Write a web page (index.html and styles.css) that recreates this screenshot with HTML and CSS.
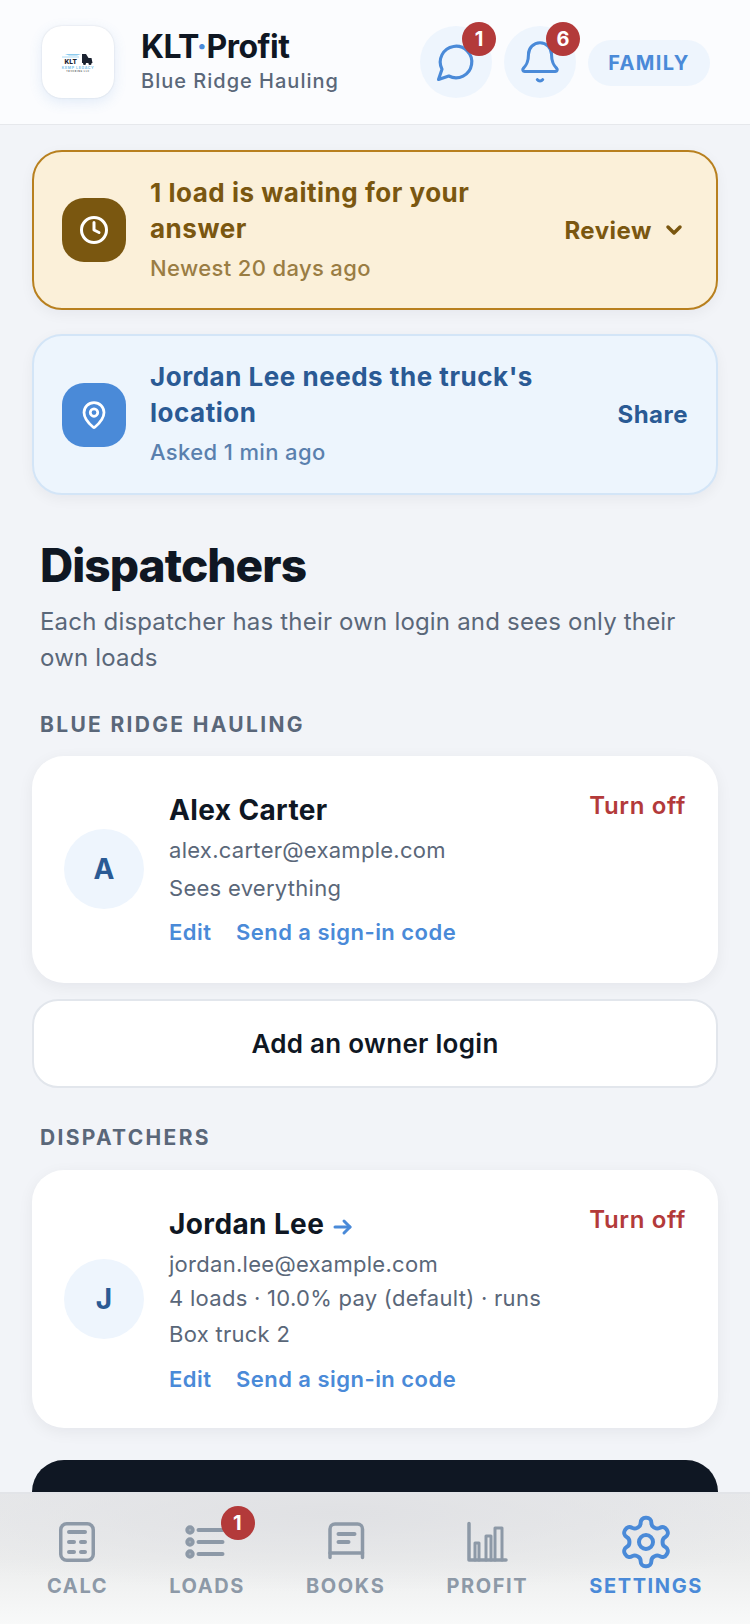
FILE: index.html
```html
<!DOCTYPE html>
<html lang="en">
<head>
<meta charset="utf-8">
<title>KLT Profit</title>
<link rel="stylesheet" href="styles.css">
</head>
<body>
<div class="app">
  <header class="topbar">
    <div class="logo">
      <svg width="42" height="20" viewBox="0 0 42 20">
        <path d="M8 2h16l-4 1.500H12z" fill="#8ccbef"/>
        <path d="M5 4.500h17v1H5z" fill="#a8d8f2"/>
        <path d="M25 2h4l2.500 4h3l1 5H25z" fill="#1b2230"/>
        <circle cx="27.500" cy="11.500" r="1.500" fill="#1b2230"/><circle cx="33" cy="11.500" r="1.500" fill="#1b2230"/>
        <text x="7.500" y="12" class="logo-klt">KLT</text>
        <text x="21" y="16.500" text-anchor="middle" class="logo-name">KEMP LEGACY</text>
        <text x="21" y="19.500" text-anchor="middle" class="logo-sub">TRUCKING LLC</text>
      </svg>
    </div>
    <div class="brand">
      <div class="brand-title">KLT<span class="dot">·</span>Profit</div>
      <div class="brand-sub">Blue Ridge Hauling</div>
    </div>
    <div class="top-actions">
      <div class="round-btn">
        <svg width="42" height="42" viewBox="0 0 24 24" fill="none" stroke="#4a8ad8" stroke-width="1.800" stroke-linecap="round" stroke-linejoin="round"><path d="M7.900 20A9 9 0 1 0 4 16.100L2 22Z"/></svg>
        <span class="badge">1</span>
      </div>
      <div class="round-btn">
        <svg width="46" height="46" viewBox="0 0 24 24" fill="none" stroke="#4a8ad8" stroke-width="1.600" stroke-linecap="round" stroke-linejoin="round"><path d="M10.600 21.200a1.800 1.800 0 0 0 2.800 0"/><path d="M3.300 15.300A1 1 0 0 0 4 17h16a1 1 0 0 0 .7-1.700C19.400 14 18 12.500 18 8A6 6 0 0 0 6 8c0 4.500-1.400 6-2.700 7.300"/></svg>
        <span class="badge">6</span>
      </div>
      <div class="pill">FAMILY</div>
    </div>
  </header>

  <main class="content">
    <section class="banner banner-wait">
      <div class="banner-icon icon-wait">
        <svg width="30" height="30" viewBox="0 0 24 24" fill="none" stroke="#fff" stroke-width="2.400" stroke-linecap="round" stroke-linejoin="round"><circle cx="12" cy="12" r="10"/><path d="M12 6v6l4 2"/></svg>
      </div>
      <div class="banner-text">
        <div class="banner-title">1 load is waiting for your answer</div>
        <div class="banner-sub">Newest 20 days ago</div>
      </div>
      <div class="banner-action">Review
        <svg width="24" height="24" viewBox="0 0 24 24" fill="none" stroke="currentColor" stroke-width="3.500" stroke-linecap="round" stroke-linejoin="round"><path d="m6 9 6 6 6-6"/></svg>
      </div>
    </section>

    <section class="banner banner-share">
      <div class="banner-icon icon-share">
        <svg width="30" height="30" viewBox="0 0 24 24" fill="none" stroke="#fff" stroke-width="2.200" stroke-linecap="round" stroke-linejoin="round"><path d="M20 10c0 5-5.500 10.200-7.400 11.800a1 1 0 0 1-1.200 0C9.500 20.200 4 15 4 10a8 8 0 0 1 16 0"/><circle cx="12" cy="10" r="3"/></svg>
      </div>
      <div class="banner-text">
        <div class="banner-title">Jordan Lee needs the truck's location</div>
        <div class="banner-sub">Asked 1 min ago</div>
      </div>
      <div class="banner-action action-share">Share</div>
    </section>

    <h1 class="page-title">Dispatchers</h1>
    <p class="page-sub">Each dispatcher has their own login and sees only their own loads</p>

    <h2 class="section-label label-first">BLUE RIDGE HAULING</h2>
    <article class="card">
      <div class="avatar">A</div>
      <div class="card-body">
        <div class="card-name">Alex Carter</div>
        <div class="card-line line-email">alex.carter@example.com</div>
        <div class="card-line line-solo">Sees everything</div>
        <div class="card-links"><span>Edit</span><span>Send a sign-in code</span></div>
      </div>
      <div class="turn-off">Turn off</div>
    </article>
    <div class="add-btn">Add an owner login</div>

    <h2 class="section-label label-second">DISPATCHERS</h2>
    <article class="card card-tall">
      <div class="avatar">J</div>
      <div class="card-body">
        <div class="card-name">Jordan Lee <svg class="arrow" width="24" height="24" viewBox="0 0 24 24" fill="none" stroke="#4a8ad8" stroke-width="3" stroke-linecap="round" stroke-linejoin="round"><path d="M4 12h15"/><path d="m13 6 6 6-6 6"/></svg></div>
        <div class="card-line line-email">jordan.lee@example.com</div>
        <div class="card-line card-wrap">4 loads · 10.0% pay (default) · runs Box truck 2</div>
        <div class="card-links"><span>Edit</span><span>Send a sign-in code</span></div>
      </div>
      <div class="turn-off">Turn off</div>
    </article>
    <div class="dark-card"></div>
  </main>

  <nav class="tabbar">
    <div class="tab">
      <svg width="44" height="44" viewBox="0 0 44 44" fill="none" stroke="#8d99a7" stroke-linecap="round"><rect x="4.750" y="3.750" width="32.500" height="36.500" rx="6" stroke-width="3.500"/><path d="M13 12h16M13 22h5M25 22h4M13 32h5M25 32h4" stroke-width="4"/></svg>
      <span>CALC</span>
    </div>
    <div class="tab">
      <svg width="44" height="44" viewBox="0 0 44 44" fill="none" stroke="#8d99a7" stroke-linecap="round"><circle cx="5" cy="10" r="3" stroke-width="3.400" fill="#a3adb8"/><circle cx="5" cy="22" r="3" stroke-width="3.400" fill="#a3adb8"/><circle cx="5" cy="34" r="3" stroke-width="3.400" fill="#a3adb8"/><path d="M13.500 10h24M13.500 22h24M13.500 34h24" stroke-width="4"/></svg>
      <span>LOADS</span>
      <span class="badge tab-badge">1</span>
    </div>
    <div class="tab">
      <svg width="44" height="44" viewBox="0 0 44 44" fill="none" stroke="#8d99a7" stroke-linecap="round" stroke-linejoin="round"><path d="M6 37.500V9a5 5 0 0 1 5-5h22.500a5 5 0 0 1 5 5v28.500" stroke-width="3.500"/><path d="M6 33h32.500" stroke-width="3.500"/><path d="M14.500 14h16M14.500 22h10" stroke-width="4"/></svg>
      <span>BOOKS</span>
    </div>
    <div class="tab">
      <svg width="44" height="44" viewBox="0 0 44 44" fill="none" stroke="#8d99a7" stroke-linecap="round" stroke-linejoin="round"><path d="M4 3.500V40h37" stroke-width="3.500"/><path d="M10 40V23h4v17M21 40V16h5v24M30 40V8h7v32" stroke-width="3"/></svg>
      <span>PROFIT</span>
    </div>
    <div class="tab tab-active">
      <svg width="58" height="58" viewBox="0 0 24 24" fill="none" stroke="#4a8ad8" stroke-width="1.650" stroke-linecap="round" stroke-linejoin="round"><path d="M12.220 2h-.44a2 2 0 0 0-2 2v.18a2 2 0 0 1-1 1.730l-.43.250a2 2 0 0 1-2 0l-.15-.08a2 2 0 0 0-2.730.730l-.22.380a2 2 0 0 0 .73 2.730l.15.100a2 2 0 0 1 1 1.720v.510a2 2 0 0 1-1 1.740l-.15.090a2 2 0 0 0-.73 2.730l.22.380a2 2 0 0 0 2.730.730l.15-.08a2 2 0 0 1 2 0l.43.250a2 2 0 0 1 1 1.730V20a2 2 0 0 0 2 2h.44a2 2 0 0 0 2-2v-.18a2 2 0 0 1 1-1.730l.43-.250a2 2 0 0 1 2 0l.15.080a2 2 0 0 0 2.730-.730l.22-.390a2 2 0 0 0-.73-2.730l-.15-.080a2 2 0 0 1-1-1.740v-.500a2 2 0 0 1 1-1.740l.15-.090a2 2 0 0 0 .73-2.730l-.22-.380a2 2 0 0 0-2.730-.730l-.15.080a2 2 0 0 1-2 0l-.43-.250a2 2 0 0 1-1-1.730V4a2 2 0 0 0-2-2z"/><circle cx="12" cy="12" r="2.900"/></svg>
      <span>SETTINGS</span>
    </div>
  </nav>
</div>
</body>
</html>
```
FILE: styles.css
```css
* { box-sizing: border-box; }
html, body { margin: 0; padding: 0; }
body { font-family: Inter, "Noto Sans", sans-serif; font-optical-sizing: none; color: #0f1723; background: #f2f4f8; }
.app { position: relative; width: 750px; height: 1624px; overflow: hidden; background: #f2f4f8; }

/* header */
.topbar { height: 125px; display: flex; align-items: center; padding: 0 40px 1px 42px; background: #fbfcfe; border-bottom: 1px solid #e6e8ec; }
.logo { width: 72px; height: 72px; border-radius: 20px; background: #fff; display: flex; align-items: center; justify-content: center; box-shadow: 0 4px 14px rgba(74,138,216,.14), 0 0 2px rgba(15,23,35,.12); flex: none; }
.logo-klt { font: 800 6.500px Inter, sans-serif; fill: #1b2230; }
.logo-name { font: 700 3.600px Inter, sans-serif; fill: #7cc2ec; letter-spacing: .6px; }
.logo-sub { font: 700 2.200px Inter, sans-serif; fill: #555; letter-spacing: .6px; }
.brand { margin-left: 27px; padding-bottom: 2px; }
.brand-title { font-size: 32px; font-weight: 700; line-height: 38px; letter-spacing: -.54px; }
.dot { color: #4a8ad8; }
.brand-sub { font-size: 20px; font-weight: 500; line-height: 26px; color: #5a6779; letter-spacing: 1px; margin-top: 2px; }
.top-actions { margin-left: auto; display: flex; align-items: center; gap: 12px; }
.round-btn { position: relative; width: 72px; height: 72px; border-radius: 50%; background: #eef5fd; display: flex; align-items: center; justify-content: center; }
.badge { position: absolute; top: -4px; right: -4px; width: 34px; height: 34px; border-radius: 50%; background: #b33a3a; color: #fff; font-size: 20px; font-weight: 700; display: flex; align-items: center; justify-content: center; }
.pill { width: 122px; height: 46px; margin-top: 2px; border-radius: 23px; background: #eef5fd; color: #4a8ad8; font-size: 20px; font-weight: 700; letter-spacing: 1.400px; display: flex; align-items: center; justify-content: center; }

/* content */
.content { padding: 25px 32px 0; }
.banner { height: 160px; display: flex; align-items: center; border-radius: 30px; padding: 0 30px 0 28px; box-shadow: 0 4px 14px rgba(15,23,35,.05); }
.banner-wait { background: #fbf0d9; border: 2px solid #b8801f; color: #7a5710; }
.banner-share { height: 161px; margin-top: 24px; background: #edf5fd; border: 2px solid #d3e5f7; color: #2a5a94; }
.banner-icon { width: 64px; height: 64px; border-radius: 22px; flex: none; display: flex; align-items: center; justify-content: center; }
.icon-wait { background: #7a5710; }
.icon-share { background: #4a8ad8; }
.banner-text { flex: 1; margin: 0 0 3px 24px; }
.banner-title { width: 390px; font-size: 26px; font-weight: 700; line-height: 36px; letter-spacing: .52px; }
.banner-sub { font-size: 22px; font-weight: 500; line-height: 30px; margin-top: 6px; opacity: .75; letter-spacing: .36px; }
.banner-action { font-size: 24px; font-weight: 700; display: flex; align-items: center; gap: 10px; letter-spacing: .5px; }
.action-share { margin-right: -2px; }

.page-title { margin: 41px 8px 0; font-size: 46px; font-weight: 800; line-height: 58px; letter-spacing: -.95px; }
.page-sub { margin: 10px 8px 0; font-size: 24px; line-height: 36px; color: #5a6779; letter-spacing: .19px; }
.section-label { margin: 0 8px; font-size: 21px; font-weight: 700; line-height: 26px; letter-spacing: 2.320px; color: #5a6779; }
.label-first { margin-top: 36px; margin-bottom: -1px; }
.label-second { margin-top: 37px; }

.card { position: relative; display: flex; align-items: center; margin-top: 19px; padding: 36px 32px 35.500px; background: #fff; border-radius: 32px; box-shadow: 0 4px 16px rgba(15,23,35,.06); }
.card-tall { padding-bottom: 33.500px; }
.avatar { width: 80px; height: 80px; margin-bottom: 2px; border-radius: 50%; background: #eef5fd; color: #2a5a94; font-size: 28px; font-weight: 700; display: flex; align-items: center; justify-content: center; flex: none; }
.card-body { margin-left: 25px; flex: 1; }
.card-name { font-size: 28px; font-weight: 700; line-height: 36px; display: flex; align-items: center; gap: 7px; letter-spacing: .38px; }
.card-line { font-size: 22px; line-height: 34.500px; color: #5a6779; letter-spacing: .28px; }
.line-email { margin-top: 5px; }
.line-solo { margin-top: 3px; }
.card-wrap { width: 390px; line-height: 35.500px; }
.card-links { display: flex; gap: 24.500px; margin-top: 12px; font-size: 22px; font-weight: 600; line-height: 30px; color: #4a8ad8; letter-spacing: .47px; }
.arrow { margin-top: 7px; }
.turn-off { position: absolute; top: 35px; right: 32px; font-size: 24px; font-weight: 600; line-height: 30px; color: #b33a3a; letter-spacing: .65px; }
.add-btn { margin-top: 16px; height: 89px; border-radius: 26px; background: #fff; border: 2px solid #e2e6ec; font-size: 26px; font-weight: 600; letter-spacing: .29px; display: flex; align-items: center; justify-content: center; }
.dark-card { height: 120px; margin-top: 32px; border-radius: 32px 32px 0 0; background: #0f1723; }

/* tab bar */
.tabbar { position: absolute; left: 0; right: 0; bottom: 0; height: 132px; display: flex; justify-content: space-between; padding: 0 47px; border-top: 2px solid #e2e4e8; background: radial-gradient(ellipse 70% 60% at 45% 15%, #e0e1e4 0%, rgba(224,225,228,0) 100%), linear-gradient(180deg, #e8e9eb 0%, #eceded 50%, #f8f9f9 100%); }
.tab { position: relative; flex: none; display: flex; flex-direction: column; align-items: center; padding-top: 26px; color: #8d99a7; font-size: 20px; font-weight: 700; letter-spacing: 1.600px; line-height: 24px; }
.tab svg { width: 44px; height: 44px; margin-bottom: 9.500px; flex: none; }
.tab-active { color: #4a8ad8; }
.tab-active svg { width: 58px; height: 58px; margin-top: -7px; margin-bottom: 2.500px; }
.tab-badge { top: 12px; right: auto; left: 52px; }
```
